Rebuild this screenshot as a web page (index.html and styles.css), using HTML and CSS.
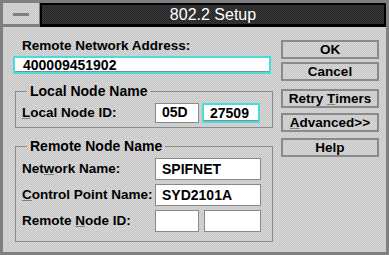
FILE: index.html
```html
<!DOCTYPE html>
<html lang="en">
<head>
  <meta charset="UTF-8">
  <title>802.2 Setup</title>
  <link rel="stylesheet" href="styles.css">
</head>
<body>
<div class="window">
  <div class="titlebar">
    <div class="sysmenu"><span class="dash"></span></div>
    <div class="title">802.2 Setup</div>
  </div>
  <div class="client">
    <div class="main">
      <div class="label top-label">Remote Network Address:</div>
      <div class="field wide active">400009451902</div>

      <fieldset class="group local">
        <legend>Local Node Name</legend>
        <div class="row">
          <span class="label name"><u>L</u>ocal Node ID:</span>
          <span class="field short">05D</span>
          <span class="field mid active">27509</span>
        </div>
      </fieldset>

      <fieldset class="group remote">
        <legend>Remote Node Name</legend>
        <div class="row">
          <span class="label name">Net<u>w</u>ork Name:</span>
          <span class="field long">SPIFNET</span>
        </div>
        <div class="row">
          <span class="label name"><u>C</u>ontrol Point Name:</span>
          <span class="field long">SYD2101A</span>
        </div>
        <div class="row">
          <span class="label name">Remote <u>N</u>ode ID:</span>
          <span class="field short"></span>
          <span class="field mid2"></span>
        </div>
      </fieldset>
    </div>

    <div class="buttons">
      <button class="btn ok">OK</button>
      <button class="btn cancel">Cancel</button>
      <button class="btn retry">Retry <u>T</u>imers</button>
      <button class="btn adv"><u>A</u>dvanced&gt;&gt;</button>
      <button class="btn help">Help</button>
    </div>
  </div>
</div>
</body>
</html>
```
FILE: styles.css
```css
body {
  margin: 0;
  font-family: "Liberation Sans", Arial, sans-serif;
  background-color: #7f7f7f;
}
.window {
  width: 389px;
  height: 255px;
  box-sizing: border-box;
  border: 3px solid #7f7f7f;
  background-color: #7f7f7f;
}
.titlebar {
  display: flex;
  height: 24px;
}
.sysmenu {
  width: 36px;
  height: 21px;
  background: repeating-conic-gradient(#c6c6c6 0 25%, #d8d8d8 0 50%) 0 0 / 2px 2px;
  display: flex;
  align-items: center;
  justify-content: center;
}
.dash {
  width: 16px;
  height: 3px;
  background-color: #808080;
  margin-top: 1px;
}
.title {
  flex: 1;
  margin-left: 1px;
  height: 19px;
  border: 2px solid #000;
  border-width: 2px 2px 3px 2px;
  background: repeating-conic-gradient(#262626 0 25%, #383838 0 50%) 0 0 / 2px 2px;
  color: #fff;
  font-size: 16px;
  line-height: 19px;
  text-align: center;
}
.client {
  display: flex;
  height: 225px;
  background: repeating-conic-gradient(#c6c6c6 0 25%, #d8d8d8 0 50%) 0 0 / 2px 2px;
}
.main {
  width: 260px;
  padding: 10px 0 0 10px;
}
.label {
  font-size: 13.5px;
  font-weight: bold;
  line-height: 16px;
  color: #000;
}
.label u, .btn u {
  text-decoration-color: #808080;
}
.top-label {
  margin-left: 9px;
  margin-top: 1px;
}
.field {
  display: block;
  box-sizing: border-box;
  height: 22px;
  background-color: #fff;
  border: 1px solid #8a8a8a;
  font-size: 14px;
  font-weight: bold;
  line-height: 20px;
  padding-left: 6px;
  color: #000;
}
.field.wide {
  width: 258px;
  height: 18px;
  line-height: 15px;
  margin-top: 2px;
  padding-left: 8px;
}
.field.active {
  border: 2px solid #44dede;
  box-shadow: inset 0 -1px 0 #8a8a8a;
}
.field.short { width: 44px; }
.field.mid { width: 58px; margin-left: 3px; }
.field.mid2 { width: 57px; margin-left: 5px; }
.field.long { width: 106px; }
.group {
  margin: 9px 0 0 2px;
  width: 258px;
  box-sizing: border-box;
  border: 1px solid #8a8a8a;
  padding: 0 0 4px 6px;
}
.group legend {
  margin-left: 5px;
  padding: 0 3px;
  font-size: 14px;
  font-weight: bold;
  line-height: 16px;
}
.local .row {
  margin-top: 4px;
}
.local .field {
  height: 20px;
  line-height: 17px;
}
.remote {
  margin-top: 10px;
  padding-bottom: 9px;
}
.row {
  display: flex;
  align-items: center;
  margin-top: 4px;
}
.row .name {
  width: 133px;
}
.buttons {
  display: flex;
  flex-direction: column;
  width: 98px;
  margin-left: 8px;
  padding-top: 13px;
}
.btn {
  height: 19px;
  padding: 0;
  border: 2px solid #8a8a8a;
  background: transparent;
  font-family: "Liberation Sans", Arial, sans-serif;
  font-size: 13.5px;
  font-weight: bold;
  line-height: 14px;
  color: #000;
}
.cancel { margin-top: 3px; }
.retry { margin-top: 8px; }
.adv { margin-top: 5px; }
.help { margin-top: 6px; }
```
